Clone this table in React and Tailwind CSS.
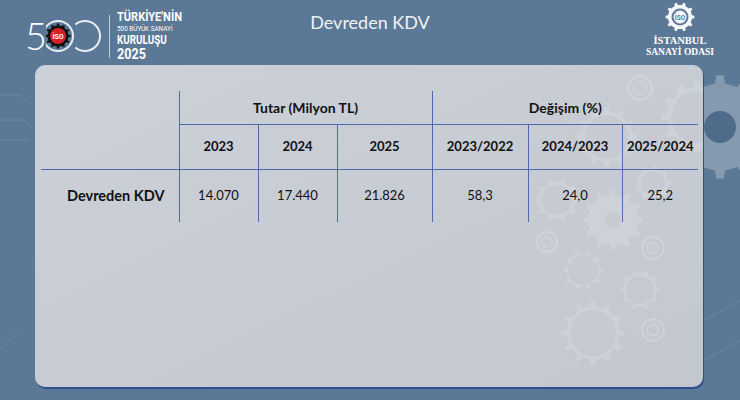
import React from 'react';

// gear outline as polygon points
const gearPoints = (cx, cy, outer, inner, teeth) => {
  const pts = [];
  const step = (Math.PI * 2) / teeth;
  for (let i = 0; i < teeth; i++) {
    const a = i * step;
    pts.push([a - step * 0.22, inner], [a - step * 0.14, outer], [a + step * 0.14, outer], [a + step * 0.22, inner]);
  }
  return pts
    .map(([a, r]) => `${(cx + r * Math.cos(a)).toFixed(2)},${(cy + r * Math.sin(a)).toFixed(2)}`)
    .join(' ');
};

const Gear = ({ cx, cy, r, teeth = 10, fill, hole, holeFill }) => (
  <g>
    <polygon points={gearPoints(cx, cy, r, r * 0.84, teeth)} fill={fill} />
    {hole && <circle cx={cx} cy={cy} r={hole} fill={holeFill} />}
  </g>
);

const Ring = ({ cx, cy, r }) => (
  <g fill="none" stroke="#dde1e6" strokeWidth="2">
    <circle cx={cx} cy={cy} r={r} />
    <circle cx={cx} cy={cy} r={r * 0.5} strokeWidth="1.5" />
  </g>
);

const LeftLogo = () => (
  <div className="flex items-center">
    <span className="text-[38px] leading-none font-light text-white font-['Lato',sans-serif] -mt-[2px]">5</span>
    <svg width="58" height="36" viewBox="0 0 58 36" className="-ml-[1px]">
      <path d="M 29.4 6.5 A 15 15 0 1 1 29.4 29.5" fill="none" stroke="#e9eef3" strokeWidth="2" />
      <circle cx="12" cy="18" r="15" fill="none" stroke="#e9eef3" strokeWidth="2" />
      <Gear cx={12} cy={18} r={12.5} teeth={12} fill="#111" />
      <circle cx="12" cy="18" r="8" fill="#d4202a" />
      <text x="12" y="21" textAnchor="middle" fontSize="7" fontWeight="700" fill="#fff" fontFamily="Roboto, sans-serif">İSO</text>
    </svg>
    <div className="w-px h-[43px] bg-[#c3cedb] ml-[5px] mr-[7px]" />
    <div className="flex flex-col items-start text-white font-['Roboto',sans-serif] leading-none w-[70px]">
      <span className="text-[12px] font-bold origin-left scale-x-[0.92]">TÜRKİYE'NİN</span>
      <span className="text-[7.5px] mt-[2px] origin-left scale-x-[0.85] whitespace-nowrap">500 BÜYÜK SANAYİ</span>
      <span className="text-[12px] font-bold mt-[2px] origin-left scale-x-[0.82]">KURULUŞU</span>
      <span className="text-[14px] font-bold mt-[1px] origin-left scale-x-[0.9]">2025</span>
    </div>
  </div>
);

const RightLogo = () => (
  <div className="flex flex-col items-center text-white">
    <svg width="30" height="30" viewBox="0 0 30 30">
      <Gear cx={15} cy={15} r={14.5} teeth={10} fill="#f4f6f8" hole={8.5} holeFill="#5b7896" />
      <circle cx="15" cy="15" r="6.5" fill="#f4f6f8" />
      <text x="15" y="17.5" textAnchor="middle" fontSize="6.5" fontWeight="700" fill="#5b7896" fontFamily="Roboto, sans-serif">İSO</text>
    </svg>
    <span className="mt-[4px] text-[10.5px] font-bold leading-none font-['Liberation_Serif',serif]">İSTANBUL</span>
    <span className="mt-[2px] text-[9.5px] font-bold leading-none font-['Liberation_Serif',serif] whitespace-nowrap">SANAYİ ODASI</span>
  </div>
);

const line = 'border-[#5069ad]';

const App = () => {
  return (
    <div className="relative w-[740px] h-[400px] overflow-hidden bg-[#5b7896] font-['Lato',sans-serif] flex flex-col">
      {/* faint background decoration */}
      <svg className="absolute inset-0" width="740" height="400" viewBox="0 0 740 400">
        <Gear cx={720} cy={127} r={52} teeth={12} fill="#8599af" hole={16} holeFill="#4f6b8a" />
        <g stroke="#6d87a2" strokeWidth="1" fill="none">
          <path d="M0 95 L20 95 L30 105" />
          <path d="M0 120 L25 120 L34 130" />
          <path d="M0 140 L30 140" />
          <path d="M0 350 L20 330" />
          <path d="M705 320 L740 300" />
          <path d="M705 360 L740 340" />
        </g>
      </svg>

      {/* header */}
      <header className="relative flex items-center h-[65px]">
        <div className="w-[250px] pl-[25px] pt-[7px]">
          <LeftLogo />
        </div>
        <h1 className="flex-1 text-center text-[18px] text-[#eef2f6] -mt-[20px]">Devreden KDV</h1>
        <div className="w-[250px] flex justify-end pr-[26px] -mt-[6px]">
          <RightLogo />
        </div>
      </header>

      {/* panel */}
      <main className="relative ml-[35px] mr-[37px] h-[322px] rounded-[10px] bg-gradient-to-br from-[#ccd0d7] to-[#c3c7cf] shadow-[1px_2px_0_#2f4e8c] overflow-hidden">
        <svg className="absolute inset-0" width="668" height="322" viewBox="0 0 668 322">
          <g opacity="0.45">
            <Gear cx={662} cy={52} r={36} teeth={12} fill="#d7dbe1" hole={26} holeFill="#c7cbd2" />
            <Gear cx={572} cy={72} r={30} teeth={12} fill="#d7dbe1" hole={22} holeFill="#c7cbd2" />
            <Gear cx={522} cy={135} r={22} teeth={10} fill="#d7dbe1" hole={15} holeFill="#c7cbd2" />
            <Gear cx={578} cy={155} r={30} teeth={12} fill="#d7dbe1" hole={8} holeFill="#c7cbd2" />
            <Gear cx={618} cy={118} r={18} teeth={9} fill="#d7dbe1" hole={12} holeFill="#c7cbd2" />
            <Gear cx={548} cy={205} r={20} teeth={10} fill="#d7dbe1" hole={15} holeFill="#c7cbd2" />
            <Gear cx={605} cy={225} r={20} teeth={10} fill="#d7dbe1" hole={14} holeFill="#c7cbd2" />
            <Gear cx={558} cy={268} r={32} teeth={12} fill="#d7dbe1" hole={23} holeFill="#c7cbd2" />
            <Ring cx={605} cy={23} r={12} />
            <Ring cx={512} cy={177} r={10} />
            <Ring cx={618} cy={183} r={11} />
            <Ring cx={618} cy={265} r={11} />
          </g>
        </svg>

        <table className="relative mt-[26px] ml-[6px] w-[657px] table-fixed border-collapse text-[#111] text-[13px]">
          <colgroup>
            <col className="w-[138px]" />
            <col className="w-[79px]" />
            <col className="w-[79px]" />
            <col className="w-[95px]" />
            <col className="w-[96px]" />
            <col className="w-[94px]" />
            <col className="w-[76px]" />
          </colgroup>
          <thead>
            <tr className="h-[33px]">
              <th rowSpan={2} className={`border-b ${line}`}></th>
              <th colSpan={3} className={`border-l border-b ${line} font-bold text-[14px]`}>Tutar (Milyon TL)</th>
              <th colSpan={3} className={`border-l border-b ${line} font-bold text-[14px]`}>Değişim (%)</th>
            </tr>
            <tr className="h-[45px] font-bold">
              <th className={`border-l border-b ${line}`}>2023</th>
              <th className={`border-l border-b ${line}`}>2024</th>
              <th className={`border-l border-b ${line}`}>2025</th>
              <th className={`border-l border-b ${line}`}>2023/2022</th>
              <th className={`border-l border-b ${line}`}>2024/2023</th>
              <th className={`border-l border-b ${line}`}>2025/2024</th>
            </tr>
          </thead>
          <tbody>
            <tr className="h-[53px] text-center">
              <td className="font-bold text-[14.5px] pl-[12px]">Devreden KDV</td>
              <td className={`border-l ${line}`}>14.070</td>
              <td className={`border-l ${line}`}>17.440</td>
              <td className={`border-l ${line}`}>21.826</td>
              <td className={`border-l ${line}`}>58,3</td>
              <td className={`border-l ${line}`}>24,0</td>
              <td className={`border-l ${line}`}>25,2</td>
            </tr>
          </tbody>
        </table>
      </main>
    </div>
  );
};

export default App;
